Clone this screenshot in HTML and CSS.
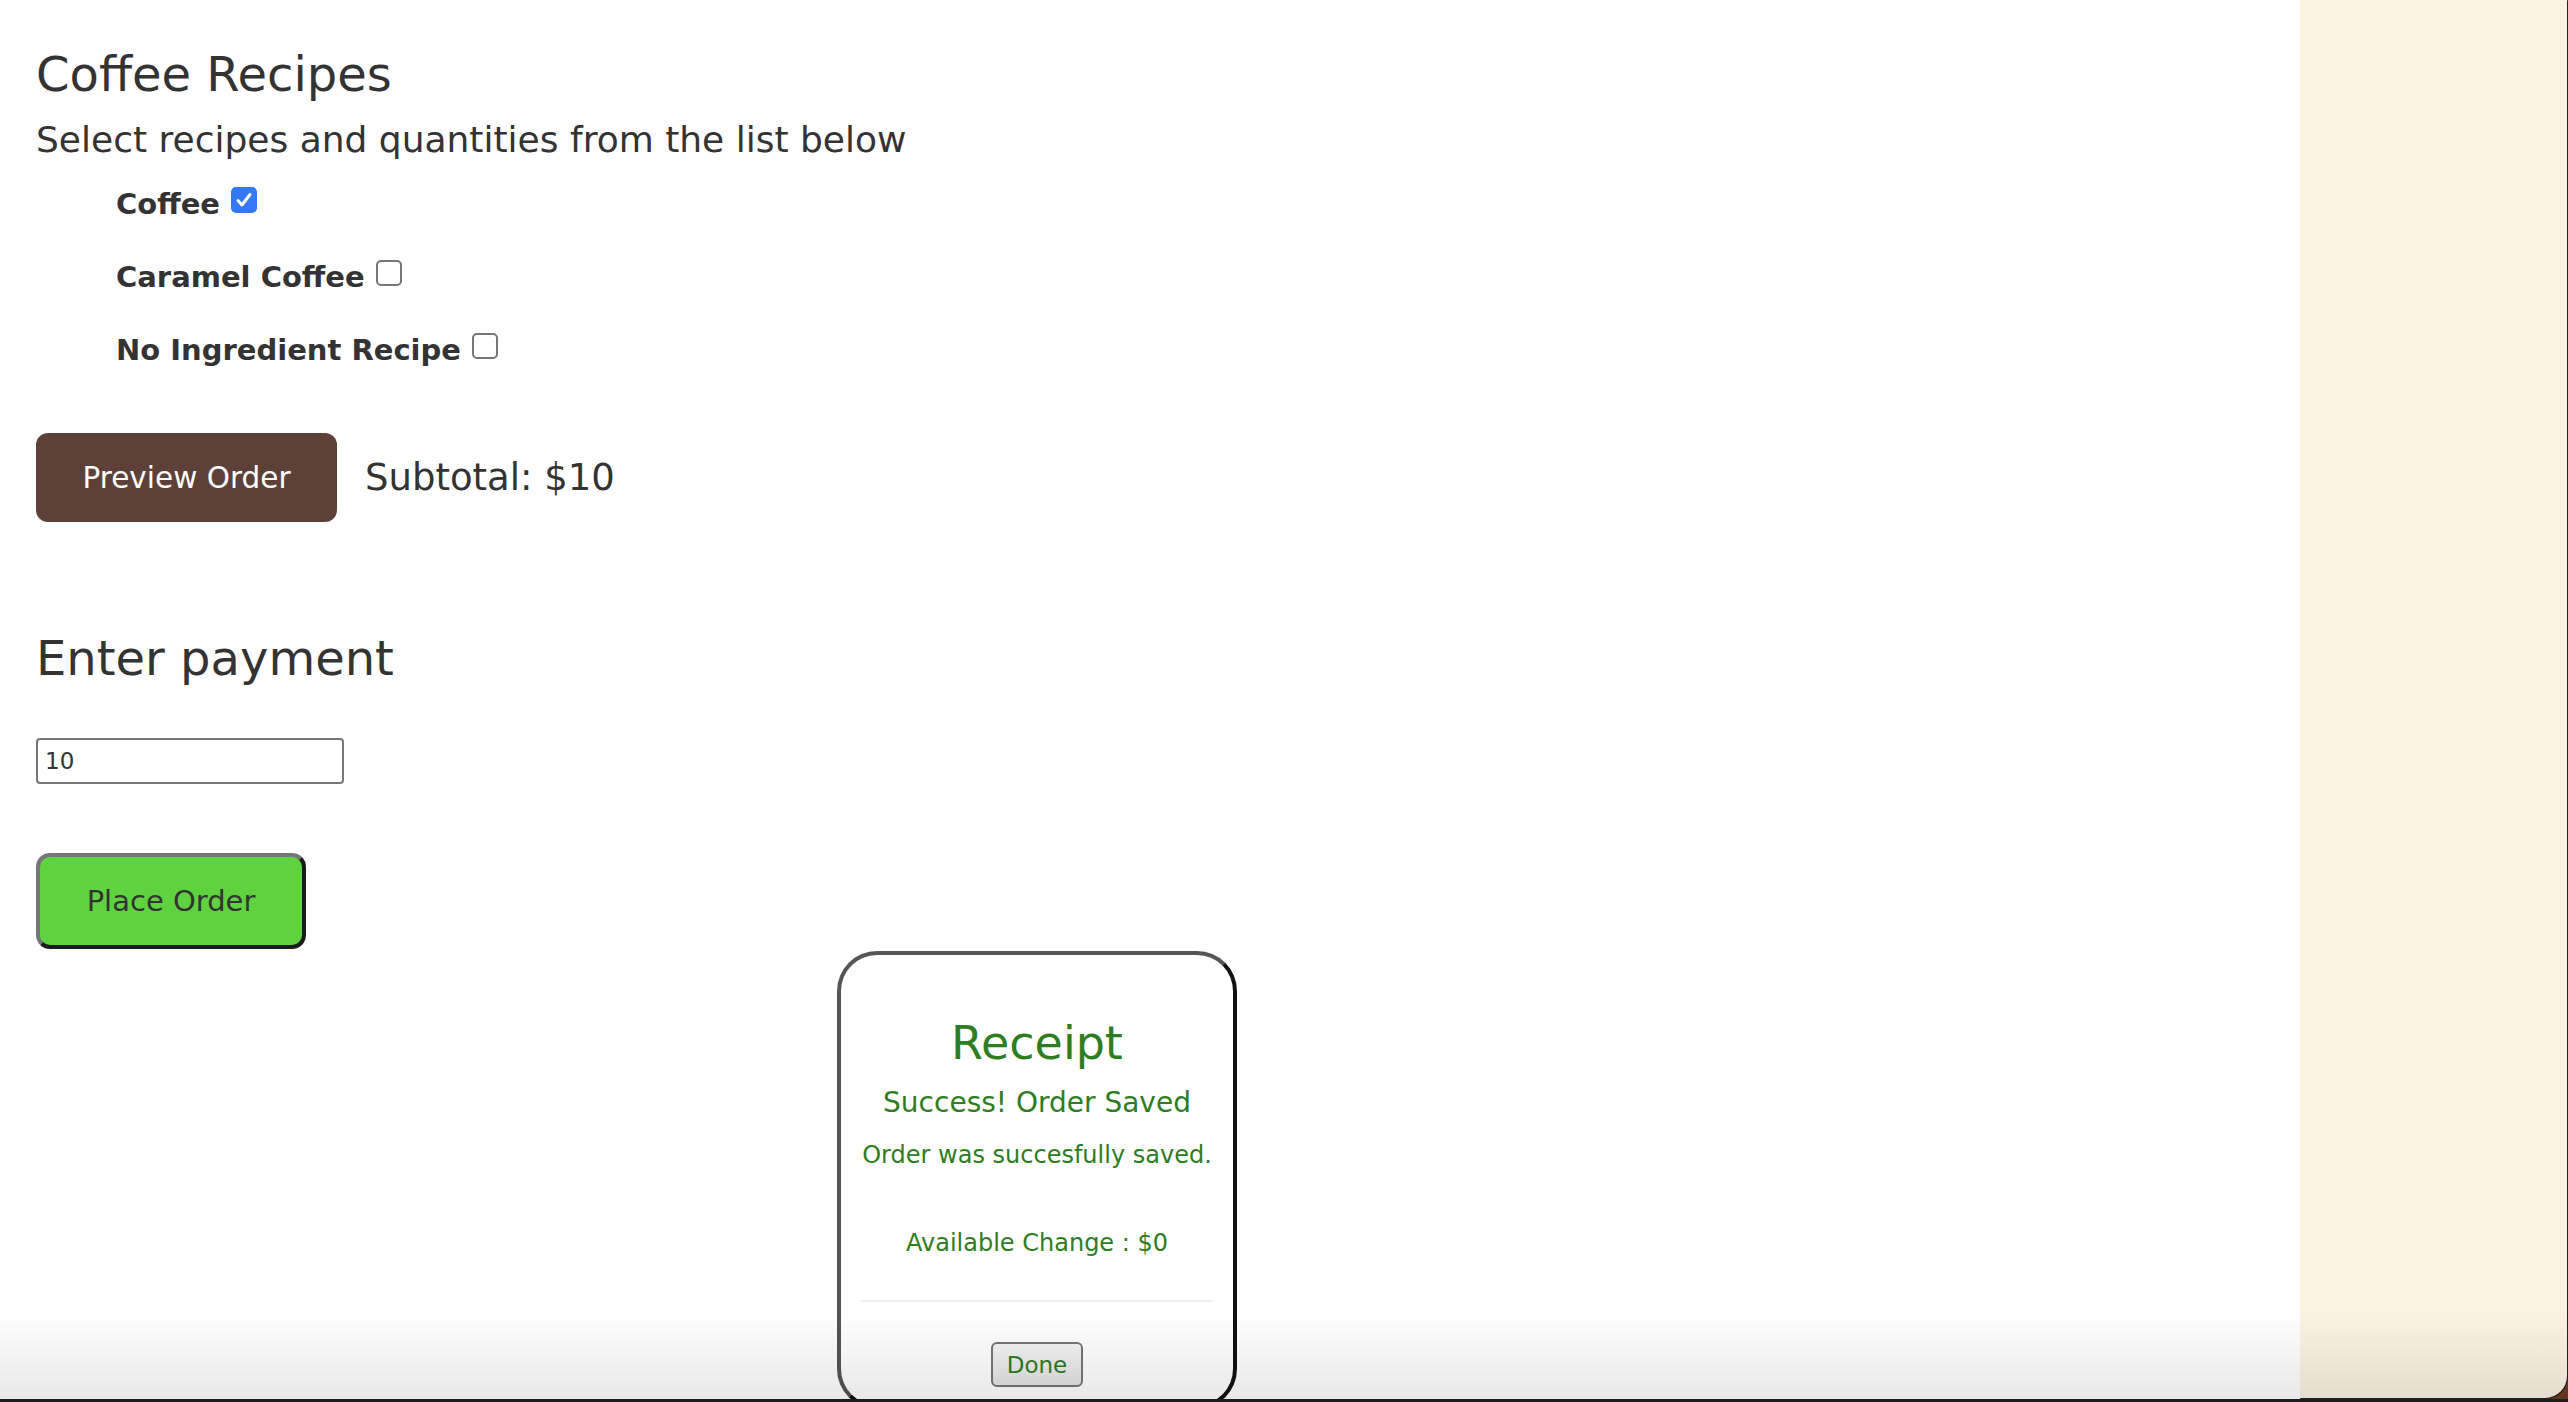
FILE: index.html
```html
<!DOCTYPE html>
<html lang="en">
<head>
<meta charset="utf-8">
<title>Coffee Recipes</title>
<link rel="stylesheet" href="styles.css">
</head>
<body>
<div class="app">
  <main class="main">
    <h2 class="title">Coffee Recipes</h2>
    <p class="subtitle">Select recipes and quantities from the list below</p>
    <div class="recipes">
      <label class="recipe">Coffee <span class="check checked" role="checkbox" aria-checked="true"><svg viewBox="0 0 26 26" width="26" height="26"><path d="M7 13.5 L11 18 L19 7.5" fill="none" stroke="#fff" stroke-width="3" stroke-linecap="round" stroke-linejoin="round"/></svg></span></label>
      <label class="recipe">Caramel Coffee <span class="check" role="checkbox" aria-checked="false"></span></label>
      <label class="recipe">No Ingredient Recipe <span class="check" role="checkbox" aria-checked="false"></span></label>
    </div>
    <div class="preview-row">
      <button class="btn-preview">Preview Order</button>
      <span class="subtotal">Subtotal: $10</span>
    </div>
    <h2 class="payment-title">Enter payment</h2>
    <input class="payment-input" type="text" value="10">
    <button class="btn-place">Place Order</button>
  </main>
  <aside class="side">
    <div class="side-panel"></div>
  </aside>
</div>

<div class="modal">
  <h1 class="modal-title">Receipt</h1>
  <h3 class="modal-status">Success! Order Saved</h3>
  <p class="modal-msg">Order was succesfully saved.</p>
  <p class="modal-change">Available Change : $0</p>
  <hr class="modal-rule">
  <button class="btn-done">Done</button>
</div>

<div class="bottom-fade"></div>
<div class="bottom-bar"></div>
</body>
</html>
```

FILE: styles.css
```css
* { box-sizing: border-box; }

html, body {
  margin: 0;
  padding: 0;
  height: 1402px;
  overflow: hidden;
  background: #ffffff;
  font-family: "DejaVu Sans", Verdana, sans-serif;
  color: #333333;
}

.app {
  display: flex;
  height: 1402px;
}

.main {
  flex: 1;
  padding: 0 0 0 36px;
  display: flex;
  flex-direction: column;
  align-items: flex-start;
}

.title {
  margin: 46px 0 0;
  font-size: 48px;
  line-height: 56px;
  font-weight: normal;
}

.subtitle {
  margin: 16px 0 0;
  font-size: 36px;
  line-height: 44px;
}

.recipes {
  margin: 24px 0 0 80px;
  display: flex;
  flex-direction: column;
  gap: 37px;
}

.recipe {
  display: block;
  font-size: 29px;
  line-height: 36px;
  font-weight: bold;
}

.check {
  display: inline-block;
  width: 26px;
  height: 26px;
  margin-left: 1px;
  border: 2px solid #767676;
  border-radius: 5px;
  background: #ffffff;
  vertical-align: baseline;
  position: relative;
  top: -1px;
}

.check svg {
  display: block;
  position: absolute;
  left: -2px;
  top: -2px;
}

.check.checked {
  background: #3478f6;
  border-color: #3478f6;
}

.preview-row {
  margin-top: 65px;
  display: flex;
  align-items: center;
  gap: 28px;
}

.btn-preview {
  height: 89px;
  width: 301px;
  padding: 0;
  border: none;
  border-radius: 12px;
  background: #5d4037;
  color: #ffffff;
  font-family: inherit;
  font-size: 29.5px;
}

.subtotal {
  font-size: 37px;
  line-height: 42px;
}

.payment-title {
  margin: 109px 0 0;
  font-size: 48px;
  line-height: 54px;
  font-weight: normal;
}

.payment-input {
  margin-top: 53px;
  width: 308px;
  height: 46px;
  padding: 0 0 0 7px;
  border: 2px solid #767676;
  border-radius: 4px;
  font-family: inherit;
  font-size: 23px;
  color: #333333;
  background: #ffffff;
}

.btn-place {
  margin-top: 69px;
  width: 270px;
  height: 96px;
  border: 4px solid;
  border-color: #767676 #1b1b1b #1b1b1b #767676;
  border-radius: 14px;
  background: #5fd33f;
  color: #333333;
  font-family: inherit;
  font-size: 29px;
  padding: 0;
}

.side {
  width: 268px;
  background: #6b3a1f;
}

.side-panel {
  height: 1398px;
  width: 267px;
  background: #fbf3e2;
  border-bottom-right-radius: 22px;
  box-shadow: 1px 1px 0 #222222;
}

/* receipt modal floats over the page */
.modal {
  position: absolute;
  left: 837px;
  top: 951px;
  width: 400px;
  height: 458px;
  border: 4px solid;
  border-color: #555555 #111111 #111111 #555555;
  border-radius: 40px;
  background: #ffffff;
  color: #2e7d22;
  text-align: center;
  padding: 61px 20px 0;
  display: flex;
  flex-direction: column;
  align-items: center;
}

.modal-title {
  margin: 0;
  font-size: 46px;
  line-height: 54px;
  font-weight: normal;
}

.modal-status {
  margin: 16px 0 0;
  font-size: 28px;
  line-height: 34px;
  font-weight: normal;
}

.modal-msg {
  margin: 20px 0 0;
  font-size: 24px;
  line-height: 30px;
}

.modal-change {
  margin: 58px 0 0;
  font-size: 24px;
  line-height: 30px;
}

.modal-rule {
  align-self: stretch;
  margin: 42px 0 0;
  border: none;
  height: 2px;
  background: #eeeeee;
}

.btn-done {
  margin-top: 40px;
  width: 92px;
  height: 45px;
  padding: 0;
  border: 2px solid #767676;
  border-radius: 6px;
  background: linear-gradient(#f4f4f4, #e4e4e4);
  color: #2e7d22;
  font-family: inherit;
  font-size: 23px;
}

.bottom-fade {
  position: absolute;
  left: 0;
  right: 0;
  top: 1310px;
  height: 89px;
  background: linear-gradient(rgba(0,0,0,0), rgba(0,0,0,0.09));
  pointer-events: none;
}

.bottom-bar {
  position: absolute;
  left: 0;
  right: 0;
  top: 1399px;
  height: 3px;
  background: #1c1c1c;
}
```
